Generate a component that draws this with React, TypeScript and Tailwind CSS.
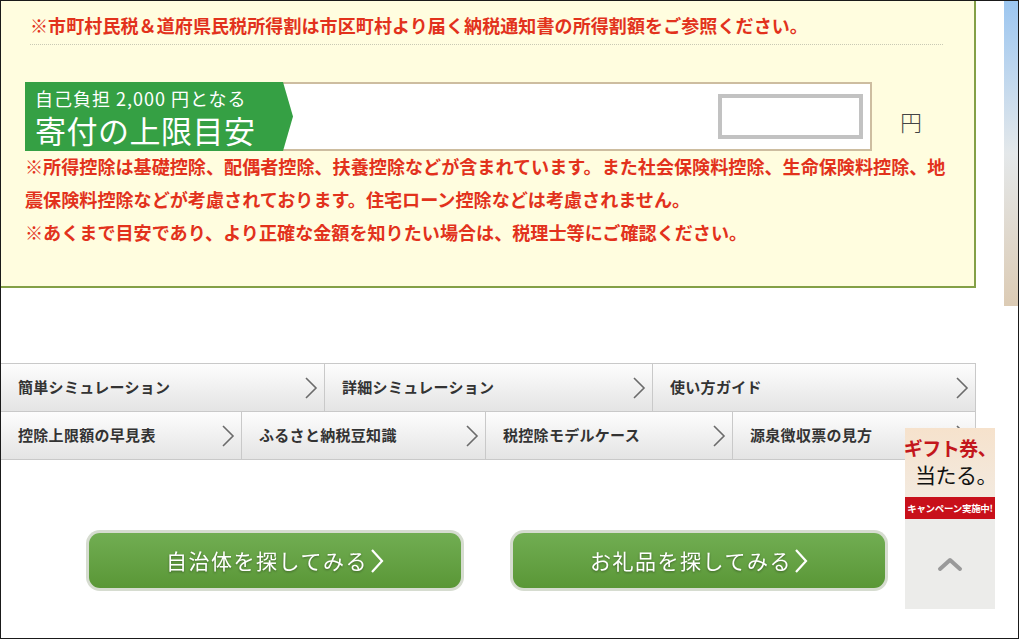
import React from 'react';

const jp = { fontFamily: '"Noto Sans CJK JP", "Noto Sans", sans-serif' };

type NavItem = { label: string; width: string };

const row1: NavItem[] = [
  { label: '簡単シミュレーション', width: 'w-[324px]' },
  { label: '詳細シミュレーション', width: 'w-[328px]' },
  { label: '使い方ガイド', width: 'flex-1' },
];

const row2: NavItem[] = [
  { label: '控除上限額の早見表', width: 'w-[241px]' },
  { label: 'ふるさと納税豆知識', width: 'w-[244px]' },
  { label: '税控除モデルケース', width: 'w-[247px]' },
  { label: '源泉徴収票の見方', width: 'flex-1' },
];

const Chevron: React.FC = () => (
  <svg width="14" height="24" viewBox="0 0 14 24" className="shrink-0">
    <polyline points="2,2 12,12 2,22" fill="none" stroke="#6b6b6b" strokeWidth="1.6" />
  </svg>
);

const NavCell: React.FC<{ item: NavItem; last?: boolean }> = ({ item, last }) => (
  <div
    className={`${item.width} h-full flex items-center justify-between pl-[17px] pr-[6px] bg-gradient-to-b from-[#fdfdfd] to-[#e4e4e4] ${last ? '' : 'border-r border-[#c9c9c9]'}`}
  >
    <span className="text-[15px] font-bold text-[#333] tracking-[0.3px]">{item.label}</span>
    <Chevron />
  </div>
);

const GreenButton: React.FC<{ label: string }> = ({ label }) => (
  <div className="w-[378px] h-[61px] rounded-[14px] p-[3px] bg-[#d6dcd0]">
    <div className="w-full h-full rounded-[11px] bg-gradient-to-b from-[#71ad52] to-[#5a9736] flex items-center justify-center">
      <span className="text-white text-[21px] tracking-[1.5px] drop-shadow-[0_1px_1px_rgba(0,0,0,0.35)]">
        {label}
      </span>
      <svg width="14" height="26" viewBox="0 0 14 26" className="ml-[2px]">
        <polyline points="2,2 12,13 2,24" fill="none" stroke="#fff" strokeWidth="2.2" />
      </svg>
    </div>
  </div>
);

export default function App() {
  return (
    <div className="w-[1019px] h-[639px] border border-[#1a1a1a] bg-white relative overflow-hidden" style={jp}>
      <div className="flex">
        {/* 左カラム */}
        <div className="w-[976px]">
          {/* 計算結果パネル */}
          <div className="h-[287px] bg-[#fffddf] border-r-2 border-b-2 border-[#83a046] pt-[12px]">
            <div className="ml-[29px] mr-[31px] border-b border-dotted border-[#c9c9b4] pb-[7px]">
              <p className="text-[18px] font-bold text-[#e2321c] leading-[24px] whitespace-nowrap tracking-[0.1px]">
                ※市町村民税＆道府県民税所得割は市区町村より届く納税通知書の所得割額をご参照ください。
              </p>
            </div>

            <div className="flex items-center mt-[37px] ml-[24px]">
              <div className="w-[847px] h-[69px] border-2 border-[#cdbda0] bg-white flex items-center relative">
                <div className="-ml-[2px] -my-[2px] h-[69px] flex">
                  <div className="w-[257px] h-full bg-[#35a044] pl-[10px] pt-[6px] text-white">
                    <div className="text-[18px] leading-[20px] tracking-[1px]">自己負担 2,000 円となる</div>
                    <div className="mt-[6px] text-[31px] leading-[32px] tracking-[0.5px]">寄付の上限目安</div>
                  </div>
                  <svg width="11" height="69" viewBox="0 0 11 69" className="shrink-0">
                    <polygon points="0,0 1,0 11,34.5 1,69 0,69" fill="#35a044" />
                  </svg>
                </div>
                <div className="ml-auto mr-[7px] w-[145px] h-[45px] border-4 border-[#c2c2c2] bg-white" />
              </div>
              <span className="ml-[28px] mt-[10px] text-[22px] text-[#444] font-light">円</span>
            </div>

            <div className="ml-[24px] -mt-[1px] text-[18.1px] font-bold text-[#e2321c] leading-[33px] whitespace-nowrap">
              <div className="h-[33px]">※所得控除は基礎控除、配偶者控除、扶養控除などが含まれています。また社会保険料控除、生命保険料控除、地</div>
              <div className="h-[33px]">震保険料控除などが考慮されております。住宅ローン控除などは考慮されません。</div>
              <div className="h-[33px]">※あくまで目安であり、より正確な金額を知りたい場合は、税理士等にご確認ください。</div>
            </div>
          </div>

          {/* ナビゲーション */}
          <div className="mt-[75px] border-t border-[#c9c9c9]">
            <div className="h-[48px] flex border-b border-r border-[#c9c9c9]">
              {row1.map((item, i) => (
                <NavCell key={item.label} item={item} last={i === row1.length - 1} />
              ))}
            </div>
            <div className="h-[48px] flex border-b border-r border-[#c9c9c9]">
              {row2.map((item, i) => (
                <NavCell key={item.label} item={item} last={i === row2.length - 1} />
              ))}
            </div>
          </div>

          {/* ボタン */}
          <div className="mt-[70px] flex gap-[46px] pl-[85px]">
            <GreenButton label="自治体を探してみる" />
            <GreenButton label="お礼品を探してみる" />
          </div>
        </div>

        {/* 右端の背景画像 */}
        <div className="ml-[28px] w-[14px] h-[305px] bg-gradient-to-b from-[#9cc6f0] via-[#e4e8ea] to-[#dccbb4]" />
      </div>

      {/* キャンペーンバナー */}
      <div className="absolute left-[904px] top-[427px] w-[90px] h-[181px] flex flex-col">
        <div className="h-[69px] bg-gradient-to-b from-[#f6e2cc] to-[#f3eadf] flex flex-col items-center pt-[7px] whitespace-nowrap">
          <span className="text-[19px] leading-[26px] text-[#c3161c] font-bold tracking-[-0.5px]">ギフト券、</span>
          <span className="text-[21px] leading-[26px] text-[#111] ml-[12px] tracking-[-0.5px]">当たる。</span>
        </div>
        <div className="h-[22px] bg-[#c8101a] flex items-center justify-center">
          <span className="text-[9.5px] font-bold text-white whitespace-nowrap tracking-[-0.3px]">キャンペーン実施中!</span>
        </div>
        <div className="flex-1 bg-[#ececea] flex items-center justify-center">
          <svg width="26" height="16" viewBox="0 0 26 16">
            <polyline points="3,13 13,4 23,13" fill="none" stroke="#9a9a9a" strokeWidth="4" strokeLinecap="round" strokeLinejoin="round" />
          </svg>
        </div>
      </div>
    </div>
  );
}
